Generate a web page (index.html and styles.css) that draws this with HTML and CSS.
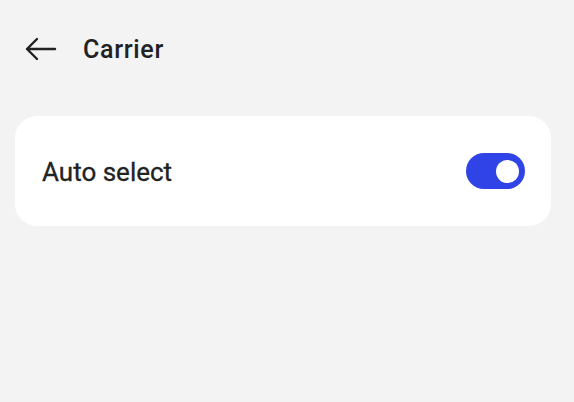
FILE: index.html
```html
<!DOCTYPE html>
<html>
<head>
<meta charset="utf-8">
<link rel="stylesheet" href="styles.css">
</head>
<body>
<div class="page">
  <header class="topbar">
    <svg class="back" width="32" height="24" viewBox="0 0 32 24">
      <path d="M2 12 H30 M12 2 L2 12 L12 22" fill="none" stroke="#222" stroke-width="2.4" stroke-linecap="round" stroke-linejoin="round"/>
    </svg>
    <h1 class="title">Carrier</h1>
  </header>
  <section class="card">
    <span class="label">Auto select</span>
    <span class="switch on"><span class="knob"></span></span>
  </section>
</div>
</body>
</html>
```
FILE: styles.css
```css
html, body {
  margin: 0;
  padding: 0;
  background: #f3f3f3;
}
body {
  width: 574px;
  height: 402px;
  font-family: Roboto, "Noto Sans", sans-serif;
  color: #222;
}
.page {
  padding: 0 15px;
}
.topbar {
  display: flex;
  align-items: center;
  height: 98px;
  padding-left: 10px;
  box-sizing: border-box;
}
.back {
  display: block;
}
.title {
  margin: 0 0 0 26px;
  font-size: 25px;
  font-weight: 500;
  letter-spacing: 0.7px;
}
.card {
  margin-top: 18px;
  height: 110px;
  width: 536px;
  background: #fff;
  border-radius: 22px;
  display: flex;
  align-items: center;
  justify-content: space-between;
  padding: 0 26px 0 27px;
  box-sizing: border-box;
}
.label {
  font-size: 26px;
  font-weight: 400;
  padding-top: 2px;
  -webkit-text-stroke: 0.3px #222;
}
.switch {
  width: 59px;
  height: 36px;
  border-radius: 18px;
  background: #2f43e6;
  display: flex;
  align-items: center;
  justify-content: flex-end;
  padding-right: 6px;
  box-sizing: border-box;
}
.knob {
  width: 23px;
  height: 23px;
  border-radius: 50%;
  background: #fff;
}
```
